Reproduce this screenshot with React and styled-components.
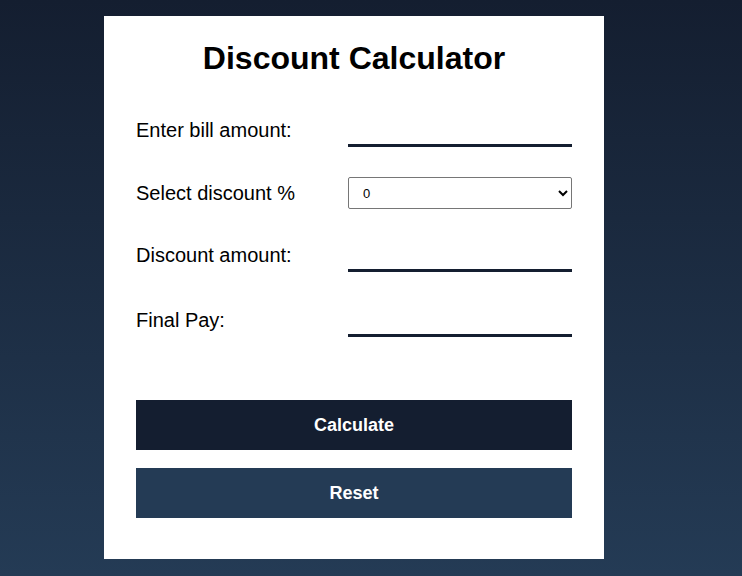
import React, { useState } from "react";
import styled, { createGlobalStyle } from "styled-components";

const GlobalStyle = createGlobalStyle`
  html, body {
    margin: 0;
    padding: 0;
  }
  body {
    font-family: "Liberation Sans", Arial, sans-serif;
  }
`;

const Page = styled.div`
  min-height: 100vh;
  box-sizing: border-box;
  padding: 16px 0 0 104px;
  background: linear-gradient(to bottom, #141e30, #243b55);
`;

const Card = styled.div`
  width: 500px;
  box-sizing: border-box;
  padding: 24px 32px 23px;
  background: #fff;
`;

const Title = styled.h1`
  margin: 0 0 37px;
  font-size: 32px;
  font-weight: 700;
  text-align: center;
  color: #000;
`;

const Row = styled.div`
  display: flex;
  align-items: center;
  justify-content: space-between;
  padding-top: ${(p) => (p.$extra ? "2px" : "0")};
  margin-bottom: 30px;
`;

const Label = styled.label`
  font-size: 20px;
  color: #000;
`;

const LineInput = styled.input`
  width: 224px;
  height: 33px;
  box-sizing: border-box;
  border: none;
  border-bottom: 3px solid #141e30;
  outline: none;
  padding: 0 4px;
  font-family: inherit;
  font-size: 18px;
  background: transparent;
`;

const Select = styled.select`
  width: 224px;
  height: 32px;
  box-sizing: border-box;
  padding: 0 10px;
  border: 1px solid #767676;
  border-radius: 2px;
  background: #fff;
  font-family: "Liberation Sans", Arial, sans-serif;
  font-size: 13px;
  color: #000;
`;

const Actions = styled.div`
  padding-top: 33px;
`;

const Button = styled.button`
  display: block;
  width: 100%;
  height: 50px;
  margin-bottom: 18px;
  border: none;
  background: ${(p) => (p.$variant === "reset" ? "#243b55" : "#141e30")};
  color: #fff;
  font-family: "Liberation Sans", Arial, sans-serif;
  font-size: 18px;
  font-weight: 700;
  cursor: pointer;
`;

export default function App() {
  const [bill, setBill] = useState("");
  const [pct, setPct] = useState("0");
  const [discount, setDiscount] = useState("");
  const [finalPay, setFinalPay] = useState("");

  const calculate = () => {
    const b = parseFloat(bill) || 0;
    const d = (b * parseFloat(pct)) / 100;
    setDiscount(d.toFixed(2));
    setFinalPay((b - d).toFixed(2));
  };

  const reset = () => {
    setBill("");
    setPct("0");
    setDiscount("");
    setFinalPay("");
  };

  return (
    <Page>
      <GlobalStyle />
      <Card>
        <Title>Discount Calculator</Title>
        <Row>
          <Label>Enter bill amount:</Label>
          <LineInput value={bill} onChange={(e) => setBill(e.target.value)} />
        </Row>
        <Row>
          <Label>Select discount %</Label>
          <Select value={pct} onChange={(e) => setPct(e.target.value)}>
            {["0", "5", "10", "15", "20", "25", "30"].map((v) => (
              <option key={v} value={v}>
                {v}
              </option>
            ))}
          </Select>
        </Row>
        <Row>
          <Label>Discount amount:</Label>
          <LineInput value={discount} readOnly />
        </Row>
        <Row $extra>
          <Label>Final Pay:</Label>
          <LineInput value={finalPay} readOnly />
        </Row>
        <Actions>
          <Button onClick={calculate}>Calculate</Button>
          <Button $variant="reset" onClick={reset}>
            Reset
          </Button>
        </Actions>
      </Card>
    </Page>
  );
}
